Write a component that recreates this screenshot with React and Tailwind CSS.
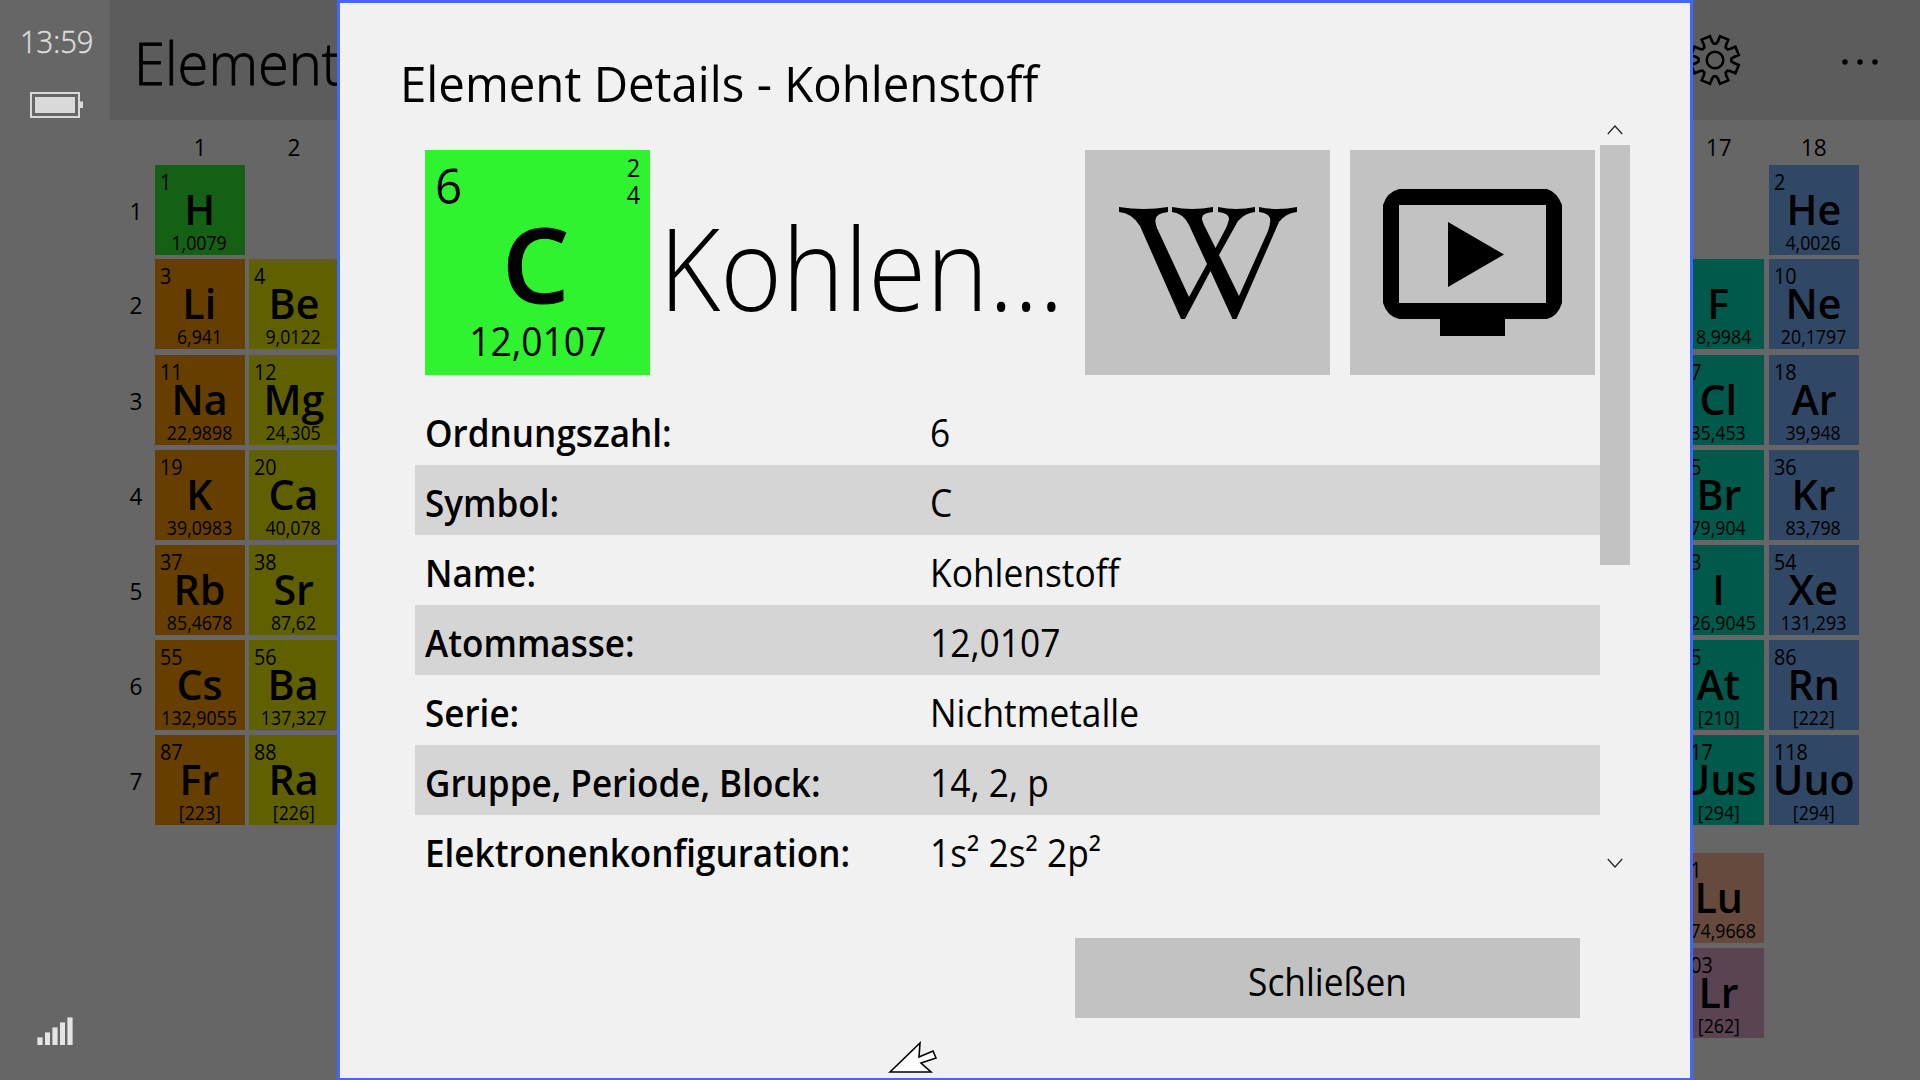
const tones = {
  green: 'bg-[#146014]',
  orange: 'bg-[#663f00]',
  olive: 'bg-[#606000]',
  teal: 'bg-[#00594a]',
  blue: 'bg-[#304765]',
  brown: 'bg-[#664a3e]',
  plum: 'bg-[#5a4452]',
};

const columns = [
  {
    place: 'col-start-1',
    items: [
      ['1', 'H', '1,0079', 'green'],
      ['3', 'Li', '6,941', 'orange'],
      ['11', 'Na', '22,9898', 'orange'],
      ['19', 'K', '39,0983', 'orange'],
      ['37', 'Rb', '85,4678', 'orange'],
      ['55', 'Cs', '132,9055', 'orange'],
      ['87', 'Fr', '[223]', 'orange'],
    ],
  },
  {
    place: 'col-start-2',
    items: [
      null,
      ['4', 'Be', '9,0122', 'olive'],
      ['12', 'Mg', '24,305', 'olive'],
      ['20', 'Ca', '40,078', 'olive'],
      ['38', 'Sr', '87,62', 'olive'],
      ['56', 'Ba', '137,327', 'olive'],
      ['88', 'Ra', '[226]', 'olive'],
    ],
  },
  {
    place: 'col-start-17',
    items: [
      null,
      ['9', 'F', '18,9984', 'teal'],
      ['17', 'Cl', '35,453', 'teal'],
      ['35', 'Br', '79,904', 'teal'],
      ['53', 'I', '126,9045', 'teal'],
      ['85', 'At', '[210]', 'teal'],
      ['117', 'Uus', '[294]', 'teal'],
      ['71', 'Lu', '174,9668', 'brown'],
      ['103', 'Lr', '[262]', 'plum'],
    ],
  },
  {
    place: 'col-start-18',
    items: [
      ['2', 'He', '4,0026', 'blue'],
      ['10', 'Ne', '20,1797', 'blue'],
      ['18', 'Ar', '39,948', 'blue'],
      ['36', 'Kr', '83,798', 'blue'],
      ['54', 'Xe', '131,293', 'blue'],
      ['86', 'Rn', '[222]', 'blue'],
      ['118', 'Uuo', '[294]', 'blue'],
    ],
  },
];

const columnLabels = [
  ['1', 'col-start-1'],
  ['2', 'col-start-2'],
  ['17', 'col-start-17'],
  ['18', 'col-start-18'],
];

const details = [
  ['Ordnungszahl:', '6'],
  ['Symbol:', 'C'],
  ['Name:', 'Kohlenstoff'],
  ['Atommasse:', '12,0107'],
  ['Serie:', 'Nichtmetalle'],
  ['Gruppe, Periode, Block:', '14, 2, p'],
  ['Elektronenkonfiguration:', '1s² 2s² 2p²'],
];

function Tile({ item }) {
  if (!item) return <div />;
  const [number, symbol, mass, tone] = item;
  return (
    <div className={`flex h-[90px] w-[90px] flex-col items-center pt-[5px] ${tones[tone]}`}>
      <span className="ml-[5px] h-6 origin-left scale-x-[0.94] self-start text-[21px] leading-6">{number}</span>
      <span className="mr-px h-[31px] scale-x-[0.98] text-[42px] leading-[29px] font-semibold">{symbol}</span>
      <span className="mr-px h-[30px] scale-x-[0.92] text-[19.3px] leading-[36px]">{mass}</span>
    </div>
  );
}

function Battery() {
  return (
    <svg className="mt-[33px] ml-[30px]" width="53" height="26" viewBox="0 0 53 26">
      <rect x="1" y="1" width="48" height="24" fill="none" stroke="#d9d9d9" strokeWidth="2" />
      <rect x="5" y="5" width="40" height="16" fill="#d9d9d9" />
      <rect x="50" y="9.5" width="3" height="6.5" fill="#d9d9d9" />
    </svg>
  );
}

function Signal() {
  return (
    <svg className="mt-auto mb-[35px] ml-[37px]" width="36" height="28" viewBox="0 0 36 28" fill="#e4e4e4">
      <rect x="0.4" y="20.4" width="5.2" height="7.6" />
      <rect x="8" y="15.4" width="5" height="12.6" />
      <rect x="15.4" y="10.4" width="5.2" height="17.6" />
      <rect x="23" y="5.4" width="5" height="22.6" />
      <rect x="30.4" y="0.4" width="5.2" height="27.6" />
    </svg>
  );
}

function Gear() {
  const turn = ([x, y], a) => [x * Math.cos(a) - y * Math.sin(a), x * Math.sin(a) + y * Math.cos(a)];
  let d = '';
  for (let i = 0; i < 8; i += 1) {
    const a = (i * Math.PI) / 4;
    const p = [[-5, -23.8], [-2.8, -18.4], [-1.3, -16.4], [1.3, -16.4], [2.8, -18.4], [5, -23.8]].map((q) =>
      turn(q, a).map((n) => n.toFixed(2)).join(' ')
    );
    d += `${i ? 'L' : 'M'}${p.join('L')}`;
  }
  return (
    <svg width="52" height="52" viewBox="-26 -26 52 52" fill="none" stroke="#000" strokeWidth="2.6">
      <path d={`${d}Z`} />
      <circle r="8.3" />
    </svg>
  );
}

function WikipediaLogo() {
  return (
    <svg width="178" height="114" viewBox="0 0 178 114" fill="#000">
      <path d="M0 0Q25 4 49 0V5Q37 6 36.500 13Q36 16 38 21L70 90L88 57L70 18Q64 6 53 5V0Q73 4 94 0V5Q83 6 83 11Q83 14 86 20L96.500 41L107 21Q110 14 110 11Q109 6 99 5V0Q117 4 136 0V5Q126 6 119 14L100 48L120 89L149 24Q152 16 151 11Q149 6 140 5V0Q159 4 178 0V5Q167 6 160 15L117.500 112H113.500L91.500 64L66 112H62L21 19Q13 6 0 5Z" />
    </svg>
  );
}

function TvIcon() {
  return (
    <svg width="180" height="147" viewBox="0 0 180 147" fill="#000">
      <path fillRule="evenodd" d="M16 0H164Q174 3 179 16V114Q175 127 164 130H122V147H57V130H16Q4 127 0 114V16Q4 3 16 0ZM16 16V114H163V16Z" />
      <path d="M65 33L121 65.5L65 98Z" />
    </svg>
  );
}

function Caret({ down }) {
  return (
    <svg width="16" height="10" viewBox="0 0 16 10" fill="none" stroke="#222" strokeWidth="1.2">
      <path d={down ? 'M0.8 1L8 9L15.2 1' : 'M0.8 9L8 1L15.2 9'} />
    </svg>
  );
}

function Dialog() {
  return (
    <div className="absolute top-0 left-[337px] flex h-[1081px] w-[1356px] flex-col border-[3px] border-[#4067ff] bg-[#f1f1f1]">
      <h1 className="mt-[47px] ml-[60px] h-[66px] w-max origin-left scale-x-[0.967] text-[49px] leading-[66px] whitespace-nowrap">
        Element Details - Kohlenstoff
      </h1>
      <div className="ml-[75px] flex h-[760px]">
        <div className="w-[1185px]">
          <div className="mt-[34px] ml-[10px] flex h-[225px]">
            <div className="flex w-[225px] flex-col items-center bg-[#2ef32e]">
              <div className="flex h-[66px] w-full justify-between pt-[4px] pr-[10px] pl-[10px]">
                <span className="origin-left scale-x-[0.97] text-[49px] leading-[62px]">6</span>
                <span className="flex origin-right scale-x-[0.94] flex-col text-[25px] leading-[27px]">
                  <span>2</span>
                  <span>4</span>
                </span>
              </div>
              <span className="mr-[3px] h-[96px] scale-x-[1.03] text-[103px] leading-[94px] font-semibold [-webkit-text-stroke:1px_#000]">C</span>
              <span className="h-[60px] scale-x-[0.93] text-[40px] leading-[57px]">12,0107</span>
            </div>
            <div className="w-[435px] pt-[59px] pl-[9px]">
              <div className="w-max origin-left scale-x-[0.925] text-[114px] leading-[116px] font-light">Kohlen...</div>
            </div>
            <div className="flex w-[245px] justify-center bg-[#c2c2c2] pt-[57px]">
              <WikipediaLogo />
            </div>
            <div className="ml-5 flex w-[245px] justify-center bg-[#c2c2c2] pt-[39px]">
              <TvIcon />
            </div>
          </div>
          <div className="mt-5">
            {details.map(([label, value], i) => (
              <div
                key={label}
                className={`flex h-[70px] pl-[10px] text-[37.5px] leading-[75px] whitespace-nowrap ${i % 2 ? 'bg-[#d5d5d5]' : ''}`}
              >
                <span className="w-[505px] origin-left scale-x-[0.935] font-semibold">{label}</span>
                <span className="origin-left scale-x-[0.942]">{value}</span>
              </div>
            ))}
          </div>
        </div>
        <div className="flex w-[30px] flex-col items-center pt-[9px]">
          <Caret />
          <div className="mt-[10px] h-[420px] w-full bg-[#c2c2c2]" />
          <div className="mt-[293px]">
            <Caret down />
          </div>
        </div>
      </div>
      <button className="mt-[62px] ml-[735px] flex h-[80px] w-[505px] shrink-0 items-start justify-center bg-[#c2c2c2] pt-[4px] text-[37.5px] leading-[80px]">
        <span className="scale-x-[0.94]">Schließen</span>
      </button>
    </div>
  );
}

export default function App() {
  return (
    <div className="relative flex h-[1080px] w-[1920px] overflow-hidden bg-[#666] font-['Open_Sans',sans-serif] text-black">
      <aside className="flex w-[110px] flex-col">
        <div className="mt-[19px] ml-[20px] h-[40px] w-max origin-left scale-x-[0.91] text-[32px] leading-[44px] font-light text-[#ddd] [-webkit-text-stroke:0.5px_#ddd]">
          13:59
        </div>
        <Battery />
        <Signal />
      </aside>
      <main className="w-[1810px]">
        <header className="flex h-[120px] justify-between bg-[#5c5c5c]">
          <div className="ml-[24px] w-max origin-left scale-x-[0.95] text-[59px] leading-[125px] font-light [-webkit-text-stroke:0.8px_#000]">
            Element
          </div>
          <div className="flex pt-[34px]">
            <Gear />
            <svg className="mt-[25px] mr-[42px] ml-[101px]" width="36" height="6" viewBox="0 0 36 6">
              <circle cx="3" cy="3" r="2.7" />
              <circle cx="18" cy="3" r="2.7" />
              <circle cx="33" cy="3" r="2.7" />
            </svg>
          </div>
        </header>
        <div className="ml-[45px] grid h-[45px] grid-cols-[94px_repeat(16,95px)_90px]">
          {columnLabels.map(([n, place]) => (
            <div key={n} className={`w-[90px] text-center text-[24px] leading-[54px] ${place}`}>
              <span className="inline-block scale-x-[0.94]">{n}</span>
            </div>
          ))}
        </div>
        <div className="flex">
          <div className="grid w-[45px] grid-rows-[94px_96px_repeat(4,95px)_90px] text-[24px] leading-[91px]">
            {['1', '2', '3', '4', '5', '6', '7'].map((n) => (
              <span key={n} className="pl-[19px]">
                <span className="inline-block scale-x-[0.94]">{n}</span>
              </span>
            ))}
          </div>
          <div className="grid grid-cols-[94px_repeat(16,95px)_90px]">
            {columns.map(({ place, items }) => (
              <div key={place} className={`grid grid-rows-[94px_96px_repeat(4,95px)_118px_95px_90px] ${place}`}>
                {items.map((item, i) => (
                  <Tile key={i} item={item} />
                ))}
              </div>
            ))}
          </div>
        </div>
      </main>
      <Dialog />
      <svg className="absolute top-[1041px] left-[888px]" width="50" height="34" viewBox="0 0 50 34">
        <path d="M2 31L32 2L31 16L45 10L48 17L33 22L43 31Z" fill="#fff" stroke="#000" strokeWidth="1.6" />
      </svg>
    </div>
  );
}
